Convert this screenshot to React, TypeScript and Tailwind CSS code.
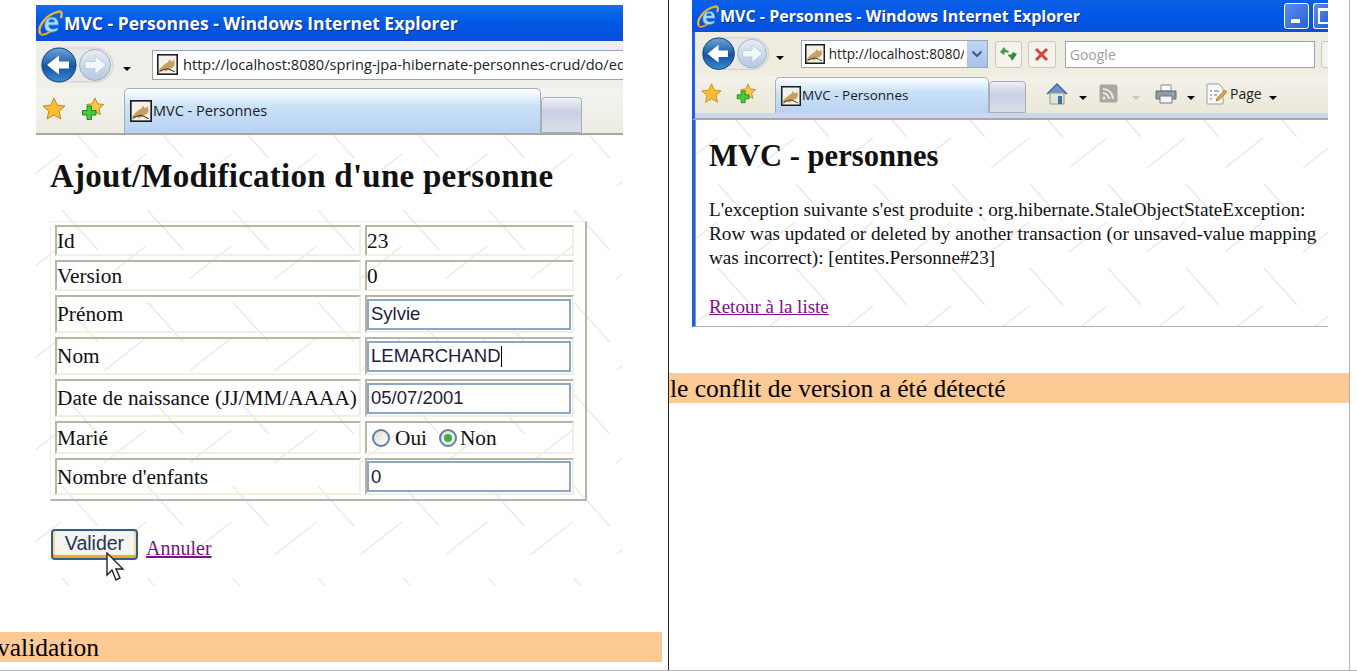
import { useId } from "react";

type Seg = [number, number, number, number];

function Watermark({ w, h, segs }: { w: number; h: number; segs: Seg[] }) {
  const id = useId();
  return (
    <svg className="absolute inset-0 h-full w-full" aria-hidden="true">
      <defs>
        <pattern id={id} width={w} height={h} patternUnits="userSpaceOnUse">
          {segs.map((s, i) => (
            <line key={i} x1={s[0]} y1={s[1]} x2={s[2]} y2={s[3]} stroke="#e8e8e6" strokeWidth="1.4" />
          ))}
        </pattern>
      </defs>
      <rect width="100%" height="100%" fill={`url(#${id})`} />
    </svg>
  );
}

function IeLogo({ size }: { size: number }) {
  return (
    <svg width={size} height={size} viewBox="0 0 24 24" className="shrink-0">
      <path
        d="M7 14.5c0-5 3-8 7-8s6 3 6 7.5H11c0 4 5 4.5 8 2l.5 2.5c-4.5 3.5-12.5 3-12.5-4zm4-3.5h5c0-3.2-5-3.2-5 0z"
        fill="#a5dcf8"
        stroke="#2c78cc"
        strokeWidth=".9"
      />
      <path d="M3 22C0 16 8 4 20 1.5c3-.5 3.5 2 2 6" fill="none" stroke="#f2b233" strokeWidth="2.2" />
      <path d="M3 22c1 1.6 5 .8 9-2" fill="none" stroke="#e8a520" strokeWidth="1.8" />
    </svg>
  );
}

function Favicon({ size }: { size: number }) {
  return (
    <svg width={size} height={size} viewBox="0 0 20 20" className="shrink-0">
      <rect x=".75" y=".75" width="18.5" height="18.5" fill="#f4f1e8" stroke="#1c1c1c" strokeWidth="1.5" />
      <path d="M2 15c3-4 6-6 8-7l2-3 1 2h2l1-2 1 5-2 3-3 1-4 3-1-2-5 3z" fill="#c9a063" />
      <path d="M3 16c3-1 5-2 7-2l3 1 4 2" fill="none" stroke="#4a4030" strokeWidth="1" />
    </svg>
  );
}

function NavButtons({ scale }: { scale: number }) {
  const w = 75 * scale;
  const h = 38 * scale;
  return (
    <svg width={w} height={h} viewBox="0 0 75 38" className="shrink-0">
      <defs>
        <linearGradient id={`back${scale}`} x1="0" y1="0" x2="0" y2="1">
          <stop offset="0" stopColor="#6ea5dc" />
          <stop offset=".55" stopColor="#14559f" />
          <stop offset="1" stopColor="#3d8ad0" />
        </linearGradient>
        <linearGradient id={`fwd${scale}`} x1="0" y1="0" x2="0" y2="1">
          <stop offset="0" stopColor="#e7edf4" />
          <stop offset="1" stopColor="#b4c8de" />
        </linearGradient>
      </defs>
      <rect x="2" y="2" width="72" height="34" rx="17" fill="#e8e8e6" stroke="#cfcfcd" />
      <circle cx="20" cy="19" r="17" fill={`url(#back${scale})`} stroke="#0f3f7d" />
      <path d="M30 15.5H20v-6L8 19l12 9.500v-6h10z" fill="#fff" />
      <circle cx="56" cy="19" r="15.5" fill={`url(#fwd${scale})`} stroke="#9db0c6" />
      <path d="M46 15.5h10v-6L67 19l-11 9.500v-6H46z" fill="#f4f7fa" stroke="#a5b8cc" strokeWidth=".6" />
    </svg>
  );
}

function Star({ size, plus }: { size: number; plus?: boolean }) {
  return (
    <svg width={size} height={size} viewBox="0 0 24 24" className="shrink-0">
      {plus ? (
        <>
          <path
            d="M15 1l2.600 5.800 6 .7-4.500 4.100 1.300 6L15 14.500 9.600 17.600l1.300-6-4.500-4.100 6-.7z"
            fill="#f9c548"
            stroke="#c98a1c"
          />
          <path d="M7 9v4.500H2.500v4.500H7v4.500h4.500V18H16v-4.500h-4.500V9z" fill="#4ac840" stroke="#1d8a1c" />
        </>
      ) : (
        <path
          d="M12 1l3.300 7.200 7.700.8-5.800 5.200 1.700 7.800L12 18l-6.900 4 1.700-7.800L1 9l7.700-.8z"
          fill="#f9bc32"
          stroke="#c98a1c"
        />
      )}
    </svg>
  );
}

function Caret({ dim }: { dim?: boolean }) {
  return (
    <span
      className={`inline-block h-0 w-0 shrink-0 border-x-[4px] border-t-[4px] border-x-transparent ${
        dim ? "border-t-[#c4c4bc]" : "border-t-black"
      }`}
    />
  );
}

function Tab({ widthClass, heightClass, iconSize, textClass }: { widthClass: string; heightClass: string; iconSize: number; textClass: string }) {
  return (
    <div
      className={`flex ${widthClass} ${heightClass} items-center gap-[1px] rounded-t-[5px] border border-b-0 border-[#a8aeb4] bg-gradient-to-b from-white via-[#c8e2f8] via-40% to-[#b8d2f2] pl-[5px]`}
    >
      <Favicon size={iconSize} />
      <span className={`${textClass} text-[#1c1c1c]`}>MVC - Personnes</span>
    </div>
  );
}

function EmptyTab({ widthClass, heightClass }: { widthClass: string; heightClass: string }) {
  return (
    <div
      className={`${widthClass} ${heightClass} rounded-t-[4px] border border-[#a8aeb4] bg-gradient-to-b from-[#eff1f6] via-[#c9d0e3] via-40% to-[#d9deea]`}
    />
  );
}

const CELL = "border-2 border-[#b9b5a6] border-r-[#f1efe2] border-b-[#f1efe2] p-0 align-middle";

function Field({ value, caret }: { value: string; caret?: boolean }) {
  return (
    <div className="flex h-[31px] w-[204px] items-center border-2 border-[#8aa6c8] bg-white pl-[2px] font-['Liberation_Sans',sans-serif] text-[18.5px] text-[#1c1c3c]">
      {value}
      {caret && <span className="h-[21px] w-[1px] bg-black" />}
    </div>
  );
}

function Radio({ checked }: { checked?: boolean }) {
  return (
    <span className="flex h-[18px] w-[18px] items-center justify-center rounded-full border-2 border-[#5f7f9f] bg-gradient-to-br from-[#dcdcd6] to-white">
      {checked && <span className="h-[8px] w-[8px] rounded-full bg-[#3cb043]" />}
    </span>
  );
}

function Row({ label, heightClass, children }: { label: string; heightClass: string; children: React.ReactNode }) {
  return (
    <tr className={heightClass}>
      <td className={`${CELL} w-[306px]`}>{label}</td>
      <td className={`${CELL} w-[209px]`}>{children}</td>
    </tr>
  );
}

function Cursor() {
  return (
    <svg width="20" height="30" viewBox="0 0 20 30" className="absolute left-[55px] top-[23px]">
      <path d="M2 1v22l5-5 4 10 4-2-4-9h7z" fill="#fff" stroke="#222" strokeWidth="1.4" />
    </svg>
  );
}

function LeftPanel() {
  return (
    <div className="flex w-[669px] shrink-0 flex-col border-r border-[#222] pt-[5px]">
      <div className="ml-[36px] w-[587px]">
        {/* IE chrome */}
        <div className="flex h-[36px] items-center gap-[1px] bg-gradient-to-b from-[#1470e8] via-[#0058e6] to-[#0a4ed8] pl-[1px]">
          <IeLogo size={26} />
          <span className="font-['Open_Sans',sans-serif] text-[17.5px] font-bold text-white [text-shadow:1px_1px_#0c2f8c]">
            MVC - Personnes - Windows Internet Explorer
          </span>
        </div>
        <div className="flex h-[47px] items-center bg-[#efefea] pl-[3px]">
          <NavButtons scale={1} />
          <span className="ml-[9px]">
            <Caret />
          </span>
          <div className="ml-[21px] flex h-[30px] flex-1 items-center gap-[5px] overflow-hidden whitespace-nowrap border-y border-l border-[#90a8c0] bg-white pl-[4px] font-['Open_Sans',sans-serif] text-[14.6px] text-[#222]">
            <Favicon size={21} />
            http://localhost:8080/spring-jpa-hibernate-personnes-crud/do/edit
          </div>
        </div>
        <div className="flex h-[47px] items-end border-b-[2px] border-[#a9a89f] bg-gradient-to-b from-[#f4f4ef] to-[#ecebe4]">
          <div className="flex flex-1 items-center gap-[14px] self-stretch pb-[3px] pl-[6px]">
            <Star size={24} />
            <Star size={24} plus />
          </div>
          <Tab
            widthClass="w-[417px]"
            heightClass="h-[45px]"
            iconSize={22}
            textClass="font-['Open_Sans',sans-serif] text-[14.5px]"
          />
          <EmptyTab widthClass="w-[41px]" heightClass="h-[36px]" />
          <div className="w-[41px]" />
        </div>

        {/* page */}
        <div className="relative h-[451px] overflow-hidden bg-white font-['Liberation_Serif',serif] text-[#111]">
          <Watermark
            w={85.3}
            h={92}
            segs={[
              [26, 75, 62, 115],
              [26, -17, 62, 23],
              [68, 52, 110, 19],
              [-17.3, 52, 24.7, 19],
            ]}
          />
          <div className="relative pl-[14px]">
            <h1 className="pt-[19px] text-[33px] font-bold leading-[44px] tracking-[0.25px]">
              Ajout/Modification d'une personne
            </h1>
            <div className="mt-[23px] w-[537px] border border-[#f1efe2] border-r-2 border-b-2 border-r-[#b9b5a6] border-b-[#b9b5a6] text-[21.3px] leading-[24px]">
              <table className="-mt-[1px] border-separate [border-spacing:4px]">
                <tbody>
                  <Row label="Id" heightClass="h-[31px]">
                    23
                  </Row>
                  <Row label="Version" heightClass="h-[31px]">
                    0
                  </Row>
                  <Row label="Prénom" heightClass="h-[38px]">
                    <Field value="Sylvie" />
                  </Row>
                  <Row label="Nom" heightClass="h-[38px]">
                    <Field value="LEMARCHAND" caret />
                  </Row>
                  <Row label="Date de naissance (JJ/MM/AAAA)" heightClass="h-[38px]">
                    <Field value="05/07/2001" />
                  </Row>
                  <Row label="Marié" heightClass="h-[33px]">
                    <span className="flex items-center pl-[5px]">
                      <Radio />
                      <span className="ml-[5px] mr-[12px]">Oui</span>
                      <Radio checked />
                      <span className="ml-[3px]">Non</span>
                    </span>
                  </Row>
                  <Row label="Nombre d'enfants" heightClass="h-[37px]">
                    <Field value="0" />
                  </Row>
                </tbody>
              </table>
            </div>
            <div className="relative mt-[28px] flex items-end gap-[8px]">
              <button className="ml-[1px] h-[31px] w-[87px] rounded-[4px] border-2 border-[#2f5f88] bg-[#f5f4ee] pb-[4px] font-['Liberation_Sans',sans-serif] text-[19.5px] leading-[22px] text-[#26345c] shadow-[inset_0_-3px_1px_#f2a52c,inset_2px_0_1px_#f8d9a0,inset_-2px_0_1px_#f8d9a0]">
                Valider
              </button>
              <a href="#" className="text-[20px] leading-[23px] text-[#800e8c] underline">
                Annuler
              </a>
              <Cursor />
            </div>
          </div>
        </div>
      </div>
      <div className="mt-[46px] h-[30px] w-[662px] bg-[#fdc994] font-['Liberation_Serif',serif] text-[25.5px] leading-[31px] -indent-[3px] text-black">
        validation
      </div>
    </div>
  );
}

function RightPanel() {
  return (
    <div className="flex w-[681px] shrink-0 flex-col border-r border-[#b4b4b4]">
      <div className="ml-[23px] w-[636px]">
        <div className="flex h-[32px] items-center bg-gradient-to-b from-[#0d5fe6] via-[#0058e6] to-[#0a4ed8] pl-[4px]">
          <IeLogo size={23} />
          <span className="ml-[1px] font-['Open_Sans',sans-serif] text-[16px] font-bold text-white [text-shadow:1px_1px_#0c2f8c]">
            MVC - Personnes - Windows Internet Explorer
          </span>
          <div className="ml-auto flex h-[27px] gap-[4px] self-center">
            <div className="flex h-[26px] w-[25px] items-end justify-start rounded-[3px] border border-white bg-gradient-to-br from-[#5a8df0] to-[#2a5fd8] pb-[5px] pl-[6px]">
              <span className="h-[4px] w-[9px] bg-white" />
            </div>
            <div className="h-[26px] w-[15px] rounded-l-[3px] border border-r-0 border-white bg-gradient-to-br from-[#5a8df0] to-[#2a5fd8] p-[4px] pr-0">
              <div className="h-full w-full border-2 border-r-0 border-t-[3px] border-white" />
            </div>
          </div>
        </div>
        <div className="flex h-[44px] items-center overflow-hidden border-l-[3px] border-[#1c5fe8] bg-[#efece0] pl-[5px]">
          <NavButtons scale={0.93} />
          <span className="ml-[6px]">
            <Caret />
          </span>
          <div className="ml-[17px] flex h-[28px] w-[187px] shrink-0 items-center border border-[#90a8c0] bg-white pl-[3px] font-['Open_Sans',sans-serif] text-[13.6px] text-[#222]">
            <Favicon size={20} />
            <span className="ml-[4px] w-[135px] overflow-hidden whitespace-nowrap">http://localhost:8080/</span>
            <span className="ml-auto flex h-full w-[20px] items-center justify-center bg-gradient-to-b from-[#c4d5f4] to-[#a9c0ea] text-[#3a5a98]">
              <svg width="12" height="8" viewBox="0 0 12 8">
                <path d="M1.500 1.500L6 6l4.500-4.500" fill="none" stroke="currentColor" strokeWidth="2" />
              </svg>
            </span>
          </div>
          <div className="ml-[7px] flex h-[27px] w-[27px] shrink-0 items-center justify-center rounded-[3px] border border-[#c9c8bf] bg-[#f4f3ee]">
            <svg width="19" height="16" viewBox="0 0 19 16">
              <path d="M1 6l4-5 2 3 3 1-1 2-3-1-1 3z" fill="#3ca03c" />
              <path d="M18 8l-5 7-2-4-2-1 1-2 2 1 2-3z" fill="#2e8f2e" />
            </svg>
          </div>
          <div className="ml-[6px] flex h-[27px] w-[28px] shrink-0 items-center justify-center rounded-[3px] border border-[#c9c8bf] bg-[#f4f3ee]">
            <svg width="15" height="15" viewBox="0 0 15 15">
              <path d="M2 2l11 11M13 2L2 13" stroke="#d8443a" strokeWidth="3" />
            </svg>
          </div>
          <div className="ml-[9px] flex h-[27px] w-[250px] shrink-0 items-center border border-[#90a8c0] bg-white pl-[4px] font-['Open_Sans',sans-serif] text-[14px] text-[#a0a09a]">
            Google
          </div>
          <div className="ml-[6px] h-[27px] w-[12px] shrink-0 rounded-l-[3px] border border-[#c9c8bf] bg-[#f4f3ee]" />
        </div>
        <div className="flex h-[37px] items-end border-l-[3px] border-[#1c5fe8] bg-gradient-to-b from-[#f3f2ea] to-[#ebe8d8]">
          <div className="flex flex-1 items-center gap-[13px] self-stretch pb-[2px] pl-[6px]">
            <Star size={21} />
            <Star size={21} plus />
          </div>
          <Tab
            widthClass="w-[214px]"
            heightClass="h-[36px]"
            iconSize={20}
            textClass="font-['Open_Sans',sans-serif] text-[13.5px]"
          />
          <EmptyTab widthClass="w-[37px]" heightClass="h-[32px]" />
          <div className="flex w-[302px] items-center self-stretch pl-[20px] pb-[2px]">
            <svg width="22" height="22" viewBox="0 0 22 22" className="shrink-0">
              <path d="M1 11L11 1l10 10" fill="#6f93c8" stroke="#47689e" strokeWidth="1.500" />
              <path d="M4 10h14v11H4z" fill="#dfe6d8" stroke="#8a9a88" />
              <path d="M12 13h4v8h-4z" fill="#3f6ea8" />
            </svg>
            <span className="ml-[11px]">
              <Caret />
            </span>
            <svg width="19" height="19" viewBox="0 0 19 19" className="ml-[12px] shrink-0">
              <rect width="18" height="18" x=".5" y=".5" rx="2" fill="#a8a8a0" />
              <path d="M4 5c5 0 10 4 10 10M4 9c3 0 6 3 6 6" fill="none" stroke="#e8e8e4" strokeWidth="2" />
              <circle cx="5" cy="14" r="1.600" fill="#e8e8e4" />
            </svg>
            <span className="ml-[14px]">
              <Caret dim />
            </span>
            <svg width="22" height="20" viewBox="0 0 22 20" className="ml-[15px] shrink-0">
              <path d="M6 1h10v6H6z" fill="#fff" stroke="#8a8a8a" />
              <path d="M1 7h20v8H1z" fill="#8e9aa4" stroke="#5e6a74" />
              <path d="M5 12h12v7H5z" fill="#f6f6f6" stroke="#6e7a84" />
              <circle cx="18" cy="10" r="1" fill="#6fe06f" />
            </svg>
            <span className="ml-[10px]">
              <Caret />
            </span>
            <svg width="21" height="22" viewBox="0 0 21 22" className="ml-[11px] shrink-0">
              <path d="M1 1h12l4 4v16H1z" fill="#f8f8f4" stroke="#9aa0a8" />
              <path d="M4 8h2M8 8h5M4 12h2M8 12h3M4 16h2" stroke="#6a7a9a" />
              <path d="M10 18l1-3 8-8 2 2-8 8z" fill="#e0a83c" stroke="#7e6a30" strokeWidth=".6" />
            </svg>
            <span className="ml-[3px] font-['Open_Sans',sans-serif] text-[14px] text-[#222]">Page</span>
            <span className="ml-[7px]">
              <Caret />
            </span>
          </div>
        </div>
        <div className="h-[7px] border-b-[2px] border-l-[3px] border-b-[#a9a89f] border-l-[#1c5fe8] bg-[#cdd6ee]" />

        <div className="relative h-[207px] overflow-hidden border-b border-l-[3px] border-b-[#b0b0b0] border-l-[#1c5fe8] bg-white font-['Liberation_Serif',serif] text-[#111]">
          <Watermark
            w={78}
            h={84}
            segs={[
              [23, -20, 56, 17],
              [23, 64, 56, 101],
              [62, 48, 100, 18],
              [-16, 48, 22, 18],
            ]}
          />
          <div className="relative h-full border-l border-[#9a9a9a] pl-[13px]">
            <h1 className="pt-[18px] text-[30.6px] font-bold leading-[36px]">MVC - personnes</h1>
            <p className="mt-[24px] text-[19.2px] leading-[24px]">
              L'exception suivante s'est produite : org.hibernate.StaleObjectStateException:
              <br />
              Row was updated or deleted by another transaction (or unsaved-value mapping
              <br />
              was incorrect): [entites.Personne#23]
            </p>
            <a href="#" className="mt-[25px] block text-[19px] leading-[24px] text-[#800e8c] underline">
              Retour à la liste
            </a>
          </div>
        </div>
      </div>
      <div className="mt-[46px] h-[30px] bg-[#fdc994] pl-[1px] font-['Liberation_Serif',serif] text-[25.5px] leading-[31px] text-black">
        le conflit de version a été détecté
      </div>
    </div>
  );
}

export default function App() {
  return (
    <div className="h-[671px] w-[1357px] overflow-hidden bg-white">
      <div className="flex h-[671px] border-b border-[#b4b4b4]">
        <LeftPanel />
        <RightPanel />
      </div>
    </div>
  );
}
